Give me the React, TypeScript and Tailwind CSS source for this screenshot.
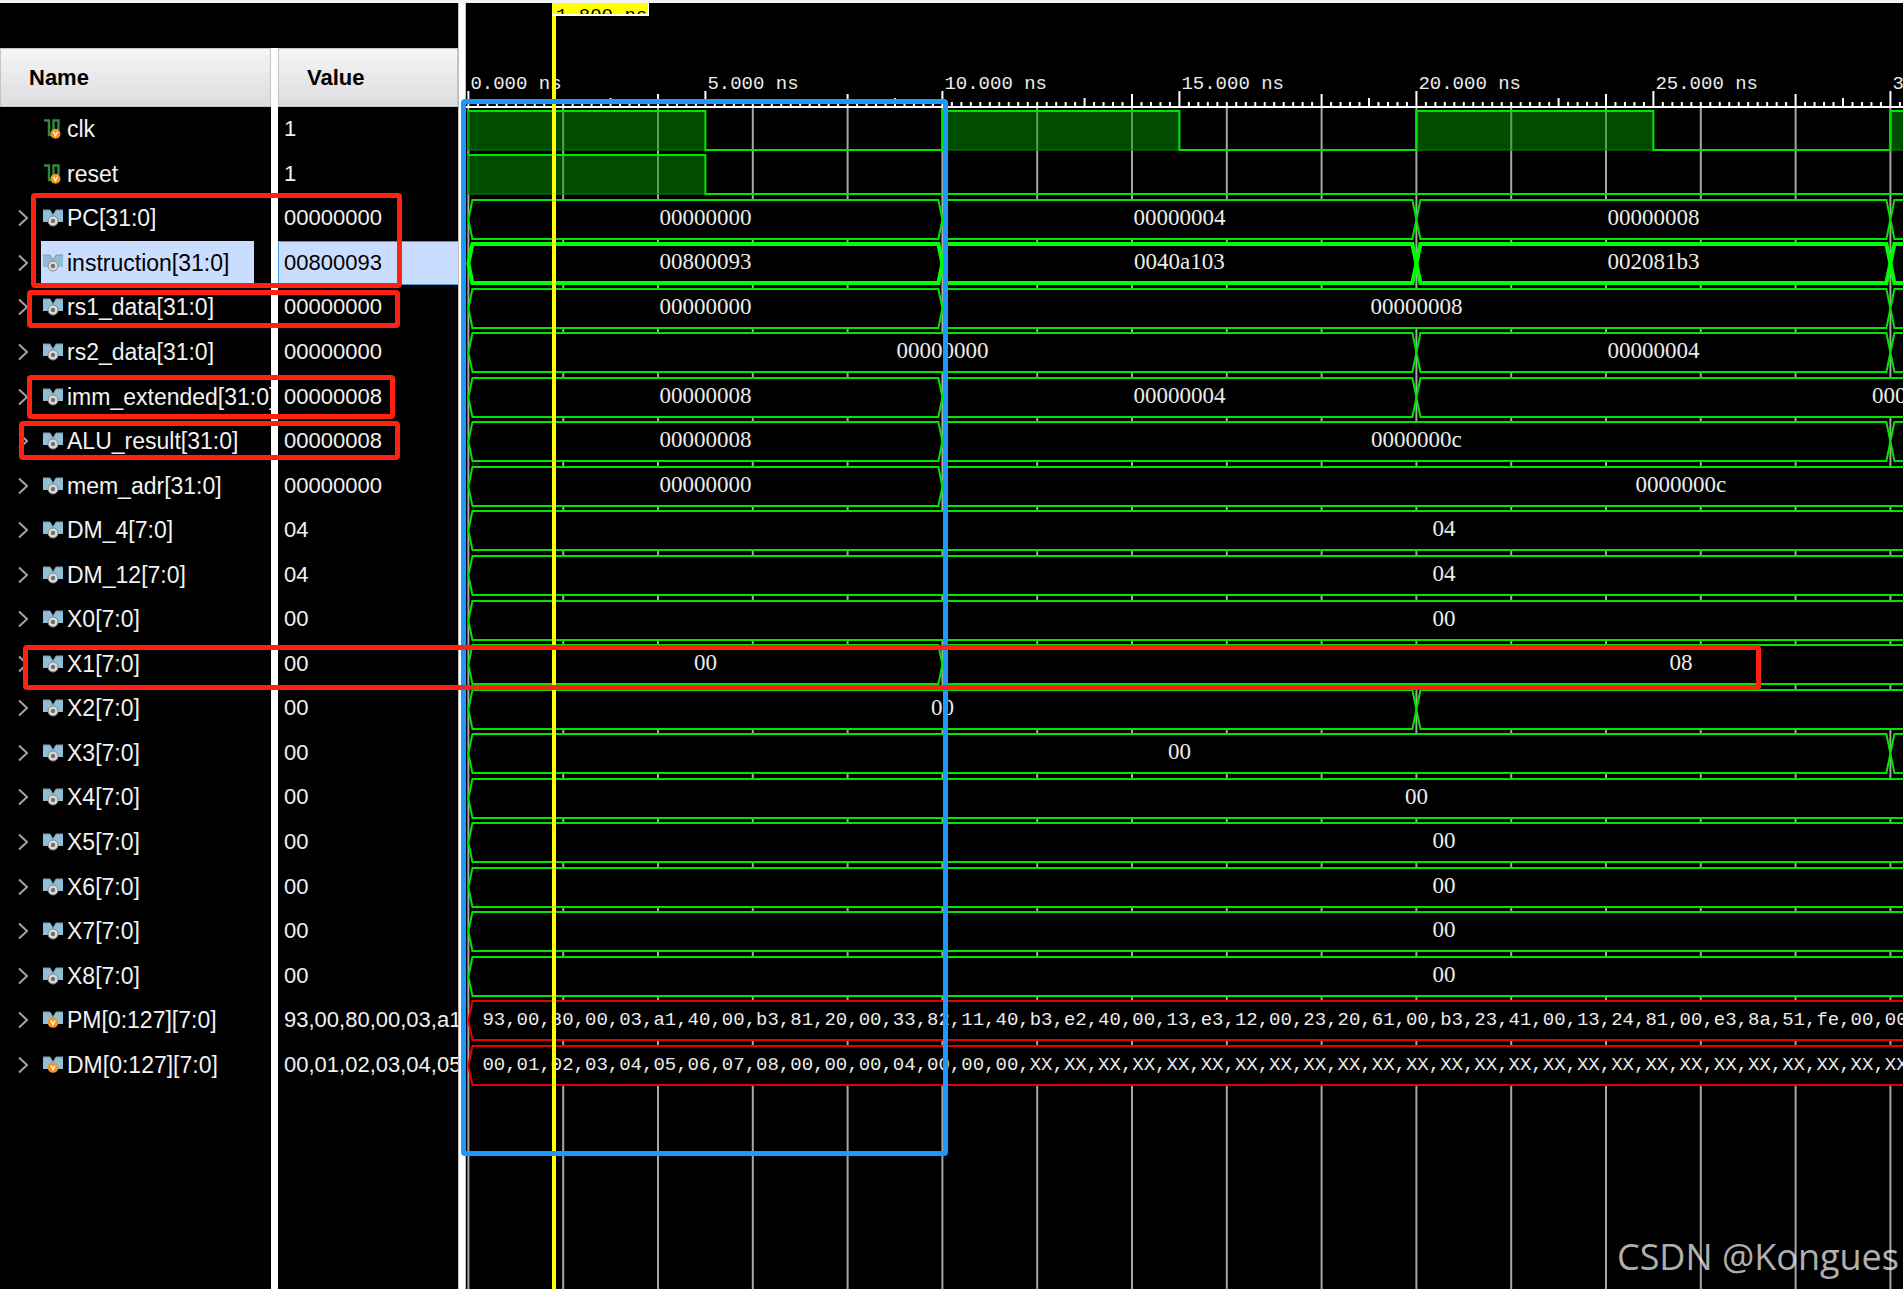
import React from 'react';

type Segment = { from: number; to: number; label?: string };

interface Signal {
  name: string;
  value: string;
  kind: 'bit' | 'bus' | 'memory';
  segments: Segment[];
  selected?: boolean;
}

// horizontal scale of the wave view, in pixels per nanosecond
const NS = 47.4;
const ORIGIN = 2.4;
const END = 60;
const ROW = 980 / 22;
const HEADER = 104;

const x = (t: number) => ORIGIN + t * NS;

const PM_TEXT =
  '93,00,80,00,03,a1,40,00,b3,81,20,00,33,82,11,40,b3,e2,40,00,13,e3,12,00,23,20,61,00,b3,23,41,00,13,24,81,00,e3,8a,51,fe,00,00';
const DM_TEXT =
  '00,01,02,03,04,05,06,07,08,00,00,00,04,00,00,00,' + Array(26).fill('XX').join(',');

const flat = (name: string, value: string, to = 41.16): Signal => ({
  name,
  value,
  kind: 'bus',
  segments: [{ from: 0, to, label: value }, ...(to < 41 ? [{ from: to, to: END }] : [])],
});

const SIGNALS: Signal[] = [
  {
    name: 'clk',
    value: '1',
    kind: 'bit',
    segments: [
      { from: 0, to: 5 },
      { from: 10, to: 15 },
      { from: 20, to: 25 },
      { from: 30, to: 35 },
    ],
  },
  { name: 'reset', value: '1', kind: 'bit', segments: [{ from: 0, to: 5 }] },
  {
    name: 'PC[31:0]',
    value: '00000000',
    kind: 'bus',
    segments: [
      { from: 0, to: 10, label: '00000000' },
      { from: 10, to: 20, label: '00000004' },
      { from: 20, to: 30, label: '00000008' },
      { from: 30, to: 60 },
    ],
  },
  {
    name: 'instruction[31:0]',
    value: '00800093',
    kind: 'bus',
    selected: true,
    segments: [
      { from: 0, to: 10, label: '00800093' },
      { from: 10, to: 20, label: '0040a103' },
      { from: 20, to: 30, label: '002081b3' },
      { from: 30, to: 60 },
    ],
  },
  {
    name: 'rs1_data[31:0]',
    value: '00000000',
    kind: 'bus',
    segments: [
      { from: 0, to: 10, label: '00000000' },
      { from: 10, to: 30, label: '00000008' },
      { from: 30, to: 60 },
    ],
  },
  {
    name: 'rs2_data[31:0]',
    value: '00000000',
    kind: 'bus',
    segments: [
      { from: 0, to: 20, label: '00000000' },
      { from: 20, to: 30, label: '00000004' },
      { from: 30, to: 60 },
    ],
  },
  {
    name: 'imm_extended[31:0]',
    value: '00000008',
    kind: 'bus',
    segments: [
      { from: 0, to: 10, label: '00000008' },
      { from: 10, to: 20, label: '00000004' },
      { from: 20, to: 41.16, label: '00000000' },
    ],
  },
  {
    name: 'ALU_result[31:0]',
    value: '00000008',
    kind: 'bus',
    segments: [
      { from: 0, to: 10, label: '00000008' },
      { from: 10, to: 30, label: '0000000c' },
      { from: 30, to: 60 },
    ],
  },
  {
    name: 'mem_adr[31:0]',
    value: '00000000',
    kind: 'bus',
    segments: [
      { from: 0, to: 10, label: '00000000' },
      { from: 10, to: 41.16, label: '0000000c' },
    ],
  },
  flat('DM_4[7:0]', '04'),
  flat('DM_12[7:0]', '04'),
  flat('X0[7:0]', '00'),
  {
    name: 'X1[7:0]',
    value: '00',
    kind: 'bus',
    segments: [
      { from: 0, to: 10, label: '00' },
      { from: 10, to: 41.16, label: '08' },
    ],
  },
  {
    name: 'X2[7:0]',
    value: '00',
    kind: 'bus',
    segments: [
      { from: 0, to: 20, label: '00' },
      { from: 20, to: 60 },
    ],
  },
  {
    name: 'X3[7:0]',
    value: '00',
    kind: 'bus',
    segments: [
      { from: 0, to: 30, label: '00' },
      { from: 30, to: 60 },
    ],
  },
  flat('X4[7:0]', '00', 40),
  flat('X5[7:0]', '00'),
  flat('X6[7:0]', '00'),
  flat('X7[7:0]', '00'),
  flat('X8[7:0]', '00'),
  {
    name: 'PM[0:127][7:0]',
    value: '93,00,80,00,03,a1',
    kind: 'memory',
    segments: [{ from: 0, to: 60, label: PM_TEXT }],
  },
  {
    name: 'DM[0:127][7:0]',
    value: '00,01,02,03,04,05',
    kind: 'memory',
    segments: [{ from: 0, to: 60, label: DM_TEXT }],
  },
];

function BitIcon() {
  return (
    <svg width="20" height="20" viewBox="0 0 20 20" className="shrink-0" aria-hidden="true">
      <path d="M1 1.500h5V16h4.500V1.500h5V11" fill="none" stroke="#2e8a3d" strokeWidth="2.400" />
      <circle cx="12.500" cy="14.800" r="5" fill="#f7941d" />
      <path d="M10.500 12.800l2 4 2-4" fill="none" stroke="#fff" strokeWidth="1.400" />
    </svg>
  );
}

function BusIcon({ memory }: { memory: boolean }) {
  return (
    <svg width="20" height="18" viewBox="0 0 20 18" className="shrink-0" aria-hidden="true">
      <path d="M0 1h7l3 5 3-5h7v12H0z" fill="#8fbfd6" />
      <path d="M0 1h7l3 5 3-5h7" fill="none" stroke="#7d99a6" />
      {memory ? (
        <>
          <circle cx="10" cy="11.500" r="5.300" fill="#f7941d" />
          <path d="M8 9.500l2 4.200 2-4.200" fill="none" stroke="#fff" strokeWidth="1.400" />
        </>
      ) : (
        <>
          <circle cx="10" cy="12" r="5" fill="#dcdcdc" stroke="#858585" />
          <circle cx="10" cy="12" r="2.200" fill="#707070" />
        </>
      )}
    </svg>
  );
}

function SignalTable() {
  return (
    <table className="flex w-[458px] shrink-0 flex-col overflow-hidden text-[22px] leading-7">
      <thead className="mt-[45px] block">
        <tr className="flex h-[59px]">
          <th className="flex w-[271px] items-center border border-[#c4c4c6] bg-linear-to-b from-[#f5f5f5] to-[#dddde0] pl-7 text-left text-black">
            Name
          </th>
          <th className="w-[7px] bg-white" aria-hidden="true" />
          <th className="flex flex-1 items-center border border-[#c4c4c6] bg-linear-to-b from-[#f5f5f5] to-[#dddde0] pl-7 text-left text-black">
            Value
          </th>
        </tr>
      </thead>
      <tbody className="grid h-[980px] grid-rows-[repeat(22,minmax(0,1fr))]">
        {SIGNALS.map((s) => (
          <tr key={s.name} className="flex min-h-0">
            <td className="flex w-[271px] items-stretch overflow-hidden text-[23px]">
              <span className="flex w-[41px] shrink-0 items-center justify-end pr-3">
                {s.kind !== 'bit' && (
                  <button aria-label={`Expand ${s.name}`}>
                    <svg width="11" height="18" viewBox="0 0 11 18" aria-hidden="true">
                      <path d="M1 1.500l8 7.500-8 7.500" fill="none" stroke="#a3a3a3" strokeWidth="2" />
                    </svg>
                  </button>
                )}
              </span>
              <span
                className={
                  s.selected
                    ? 'flex w-[213px] items-center gap-1 bg-[#cbddff] pl-[2px] whitespace-nowrap text-black'
                    : 'flex items-center gap-1 pl-[2px] whitespace-nowrap'
                }
              >
                {s.kind === 'bit' ? <BitIcon /> : <BusIcon memory={s.kind === 'memory'} />}
                {s.name}
              </span>
            </td>
            <td className="w-[7px] bg-white" aria-hidden="true" />
            <td
              className={
                s.selected
                  ? 'flex min-w-0 flex-1 items-center overflow-hidden border-y border-l border-[#4a9be0] bg-[#cbddff] pl-[5px] text-black'
                  : 'flex min-w-0 flex-1 items-center overflow-hidden pl-[6px]'
              }
            >
              {s.value}
            </td>
          </tr>
        ))}
      </tbody>
      <tfoot className="flex flex-1">
        <tr className="flex flex-1">
          <td className="w-[271px]" />
          <td className="w-[7px] bg-white" />
        </tr>
      </tfoot>
    </table>
  );
}

function Ruler() {
  const ticks = Array.from({ length: END * 5 + 1 }, (_, i) => i / 5);
  const top = (t: number) => {
    if (t % 5 === 0) return 88;
    if (t % 10 === 4 || t % 10 === 8) return 91;
    if (t % 10 === 3 || t % 10 === 9) return 95;
    return 99;
  };
  return (
    <g>
      {ticks.map((t) => (
        <line key={t} x1={x(t)} x2={x(t)} y1={top(t)} y2={HEADER} stroke="#fff" strokeWidth="2" />
      ))}
      <line x1="0" x2={x(END)} y1={HEADER} y2={HEADER} stroke="#fff" strokeWidth="2" />
      {[0, 5, 10, 15, 20, 25, 30].map((t) => (
        <text key={t} x={x(t) + 2} y="86" fill="#ececec" className="font-['Liberation_Mono',monospace] text-[19px]">
          {t}.000 ns
        </text>
      ))}
    </g>
  );
}

function BitWave({ signal, y }: { signal: Signal; y: number }) {
  const top = y + 4;
  const bottom = y + 43;
  let d = '';
  signal.segments.forEach((s) => {
    d += `${d ? 'H' + x(s.from) : 'M' + x(s.from) + ' ' + top}V${top}H${x(s.to)}V${bottom}`;
  });
  return (
    <g>
      {signal.segments.map((s) => (
        <rect
          key={s.from}
          x={x(s.from)}
          y={top}
          width={x(s.to) - x(s.from)}
          height={39}
          fill="#00a000"
          fillOpacity="0.480"
          stroke="#009000"
        />
      ))}
      <path d={`${d}H${x(END)}`} fill="none" stroke="#00e600" strokeWidth="2" />
    </g>
  );
}

function BusWave({ signal, y }: { signal: Signal; y: number }) {
  const top = y + 4;
  const bottom = y + 43;
  const mid = y + 23.5;
  const memory = signal.kind === 'memory';
  return (
    <g>
      {signal.segments.map((s) => {
        const a = x(s.from);
        const b = x(s.to);
        return (
          <g key={s.from}>
            <path
              d={`M${a} ${mid}L${a + 4} ${top}H${b - 4}L${b} ${mid}L${b - 4} ${bottom}H${a + 4}Z`}
              fill="#000"
              stroke={memory ? '#e60000' : signal.selected ? '#00ff00' : '#00e600'}
              strokeWidth={signal.selected ? 4 : 2}
            />
            {s.label && (
              <text
                x={memory ? a + 14 : (a + b) / 2}
                y={memory ? y + 28 : y + 29}
                fill="#ececec"
                textAnchor={memory ? 'start' : 'middle'}
                className={
                  memory
                    ? "font-['Liberation_Mono',monospace] text-[19px]"
                    : "font-['Liberation_Serif',serif] text-[23px]"
                }
              >
                {s.label}
              </text>
            )}
          </g>
        );
      })}
    </g>
  );
}

function WaveView() {
  const gridLines = Array.from({ length: END / 2 + 1 }, (_, i) => i * 2);
  return (
    <section className="relative min-w-0 flex-1 overflow-hidden" aria-label="Waveform">
      <svg className="absolute inset-0 h-full w-full" role="img" aria-label="Signal waveforms">
        {gridLines.map((t) => (
          <line key={t} x1={x(t)} x2={x(t)} y1={HEADER} y2="100%" stroke="#a6a6a6" strokeWidth="2" />
        ))}
        <Ruler />
        {SIGNALS.map((s, i) => {
          const y = Math.floor(HEADER + i * ROW);
          return s.kind === 'bit' ? (
            <BitWave key={s.name} signal={s} y={y} />
          ) : (
            <BusWave key={s.name} signal={s} y={y} />
          );
        })}
      </svg>

      {/* time cursor */}
      <div className="absolute inset-y-0 left-[86px] w-1 bg-[#ffff00]" />
      <div className="absolute top-0 left-[86px] h-[13px] w-[97px] overflow-hidden border-r border-b-2 border-white bg-[#ffff00] pt-[3px] pl-1 font-['Liberation_Mono',monospace] text-[19px] leading-5 whitespace-nowrap text-black">
        1.800 ns
      </div>
    </section>
  );
}

export default function App() {
  return (
    <main className="relative flex min-h-screen overflow-hidden border-t-[3px] border-[#f4f4f4] bg-black font-['Liberation_Sans',Arial,sans-serif] text-[#f2f2f2]">
      <SignalTable />
      <div className="w-2 shrink-0 border-x border-[#bdbdbd] bg-white" />
      <WaveView />

      {/* highlight frames */}
      <div className="absolute top-[96px] left-[461px] h-[1057px] w-[487px] rounded border-[5px] border-[#1c98ff]" />
      <div className="absolute top-[190px] left-[31px] h-[95px] w-[371px] rounded border-[5px] border-[#ff2112]" />
      <div className="absolute top-[287px] left-[27px] h-[38px] w-[373px] rounded border-[5px] border-[#ff2112]" />
      <div className="absolute top-[372px] left-[27px] h-[44px] w-[368px] rounded border-[5px] border-[#ff2112]" />
      <div className="absolute top-[418px] left-[19px] h-[39px] w-[381px] rounded border-[5px] border-[#ff2112]" />
      <div className="absolute top-[642px] left-[23px] h-[45px] w-[1738px] rounded border-[5px] border-[#ff2112]" />

      <p className="absolute right-1 bottom-2 font-['Open_Sans',sans-serif] text-[36px] leading-[48px] text-white/70">
        CSDN @Kongues
      </p>
    </main>
  );
}
